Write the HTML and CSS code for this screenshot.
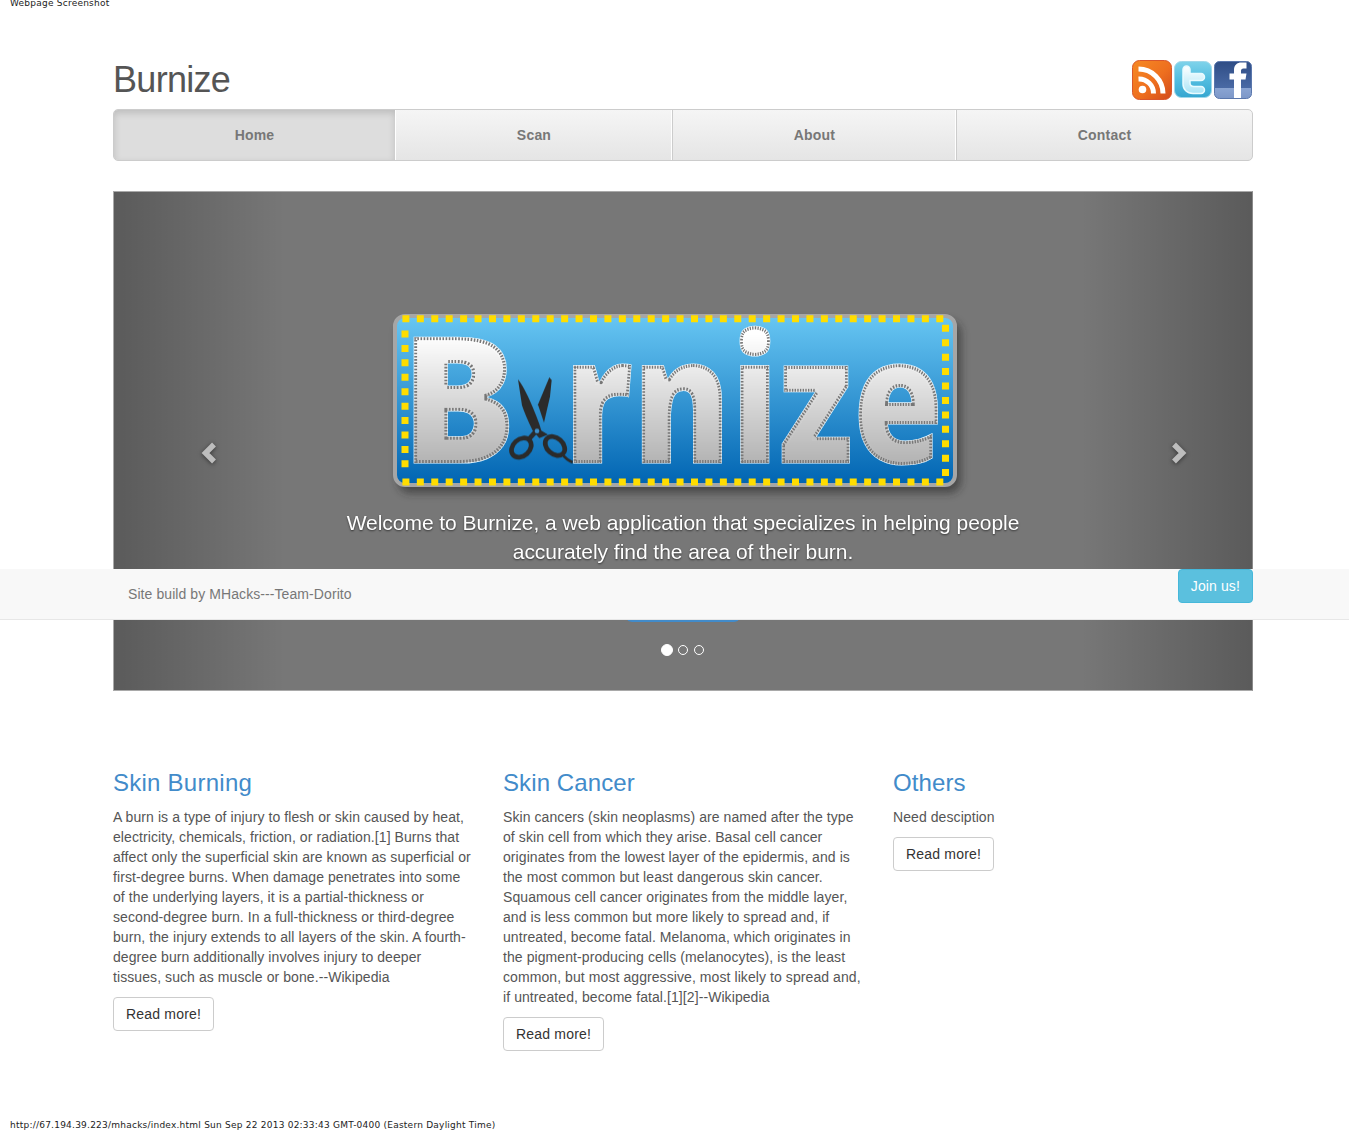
FILE: index.html
```html
<!DOCTYPE html>
<html lang="en">
<head>
    <meta charset="UTF-8">
    <meta name="viewport" content="width=device-width, initial-scale=1.0">
    <title>Burnize</title>
    <link rel="stylesheet" href="styles.css">
</head>
<body>
    <div class="shot-caption top-caption">Webpage Screenshot</div>

    <div class="container">
        <div class="masthead">
            <h1>Burnize</h1>
            <div class="social">
                <svg class="icon-rss" width="40" height="40" viewBox="0 0 40 40">
                    <defs>
                        <linearGradient id="rssBg" x1="0" y1="0" x2="1" y2="1">
                            <stop offset="0" stop-color="#f68a24"/>
                            <stop offset="0.55" stop-color="#ee6f1f"/>
                            <stop offset="1" stop-color="#d24a1c"/>
                        </linearGradient>
                    </defs>
                    <rect x="0.5" y="0.5" width="39" height="39" rx="7" fill="url(#rssBg)" stroke="#d8562c"/>
                    <circle cx="10.5" cy="29.5" r="3.8" fill="#fff"/>
                    <path d="M6.5 19 A14.5 14.5 0 0 1 21.5 33.5" fill="none" stroke="#fff" stroke-width="5"/>
                    <path d="M6.5 9 A24.5 24.5 0 0 1 31 33.5" fill="none" stroke="#fff" stroke-width="5"/>
                </svg>
                <svg class="icon-twitter" width="38" height="38" viewBox="0 0 38 38">
                    <defs>
                        <linearGradient id="twBg" x1="0" y1="0" x2="0" y2="1">
                            <stop offset="0" stop-color="#7fd3ea"/>
                            <stop offset="0.5" stop-color="#52bde0"/>
                            <stop offset="1" stop-color="#35a6d0"/>
                        </linearGradient>
                        <linearGradient id="twT" x1="0" y1="0" x2="0" y2="1">
                            <stop offset="0" stop-color="#ffffff"/>
                            <stop offset="1" stop-color="#a9e4f6"/>
                        </linearGradient>
                    </defs>
                    <rect x="0.5" y="0.5" width="37" height="36" rx="7" fill="url(#twBg)" stroke="#9fd8ea"/>
                    <path d="M9 8.5 a3.5 3.5 0 0 1 7 0 v4 h11 a3.5 3.5 0 0 1 0 7 h-11 v2.5 c0 2 1.5 3.5 4 3.5 h7 a3.5 3.5 0 0 1 0 7 h-8 c-6 0 -10 -4 -10 -9.5 z" fill="url(#twT)" stroke="#e8fbff" stroke-width="1.5"/>
                </svg>
                <svg class="icon-facebook" width="38" height="38" viewBox="0 0 38 38">
                    <defs>
                        <linearGradient id="fbBg" x1="0" y1="0" x2="0" y2="1">
                            <stop offset="0" stop-color="#2f4d85"/>
                            <stop offset="0.72" stop-color="#4a6aa5"/>
                            <stop offset="0.72" stop-color="#8aa4d2"/>
                            <stop offset="1" stop-color="#7c97c8"/>
                        </linearGradient>
                    </defs>
                    <rect x="0.5" y="0.5" width="37" height="37" rx="5" fill="url(#fbBg)" stroke="#5a77ac"/>
                    <path d="M20 37 V18.5 h-4.5 v-6 H20 V9 c0 -5 3 -7.5 7.5 -7.5 h5 v6 H29.5 c-1.8 0 -2.5 1 -2.5 2.5 v2.5 h5.5 L31.5 18.5 H27 v18.5 z" fill="#fff"/>
                </svg>
            </div>
        </div>

        <ul class="main-nav">
            <li class="active"><a href="#">Home</a></li>
            <li><a href="#">Scan</a></li>
            <li><a href="#">About</a></li>
            <li><a href="#">Contact</a></li>
        </ul>

        <div class="carousel">
            <svg class="logo" width="606" height="200" viewBox="0 0 606 200">
                <defs>
                    <linearGradient id="boardBg" x1="0" y1="0" x2="0" y2="1">
                        <stop offset="0" stop-color="#67c6f3"/>
                        <stop offset="1" stop-color="#0064b2"/>
                    </linearGradient>
                    <linearGradient id="letterFill" gradientUnits="userSpaceOnUse" x1="0" y1="-125" x2="0" y2="2">
                        <stop offset="0" stop-color="#ffffff"/>
                        <stop offset="1" stop-color="#b4b4b4"/>
                    </linearGradient>
                    <filter id="boardShadow" x="-5%" y="-10%" width="110%" height="125%">
                        <feGaussianBlur stdDeviation="4"/>
                    </filter>
                    <filter id="letterInset" color-interpolation-filters="sRGB">
                        <feMorphology operator="erode" radius="2.8"/>
                    </filter>
                    <clipPath id="lettersClip">
                        <use href="#logoB"/>
                        <use href="#logoRest"/>
                    </clipPath>
                </defs>
                <rect x="18" y="21" width="563" height="172" rx="12" fill="#222" opacity=".55" filter="url(#boardShadow)"/>
                <rect x="15" y="16" width="560" height="169" rx="10" fill="url(#boardBg)" stroke="#a6a6a6" stroke-width="4"/>
                <line class="stitch" x1="22.4" y1="18.7" x2="568" y2="18.7"/>
                <line class="stitch" x1="22.4" y1="182" x2="568" y2="182"/>
                <line class="stitch" x1="25" y1="30.5" x2="25" y2="170"/>
                <line class="stitch" x1="565.5" y1="24.8" x2="565.5" y2="176"/>
                <g class="letters-base">
                    <text id="logoB" class="logo-word" transform="translate(21 163) scale(.98 1)">B</text>
                    <text id="logoRest" class="logo-word" transform="translate(184 163) scale(.837 1)">rnize</text>
                </g>
                <g clip-path="url(#lettersClip)">
                    <g class="letters-dash">
                        <use href="#logoB"/>
                        <use href="#logoRest"/>
                    </g>
                    <g class="letters-top" filter="url(#letterInset)">
                        <use href="#logoB"/>
                        <use href="#logoRest"/>
                    </g>
                </g>
                <g transform="scale(.3333)" fill="#2b2b2b">
                    <path d="M414 238 Q440 270 478 372 L484 392 L504 404 L478 414 L458 392 Q436 346 426 316 Z"/>
                    <path d="M508 232 L515 240 L510 290 L492 368 L474 314 Z"/>
                    <g fill="none" stroke="#2b2b2b">
                        <ellipse cx="424" cy="443" rx="33" ry="25" transform="rotate(-42 424 443)" stroke-width="14"/>
                        <ellipse cx="525" cy="438" rx="33" ry="24" transform="rotate(42 525 438)" stroke-width="14"/>
                        <path d="M466 396 L446 418" stroke-width="14"/>
                        <path d="M546 462 Q560 480 578 487" stroke-width="8"/>
                    </g>
                    <circle cx="471" cy="393" r="7" fill="#3d8fca"/>
                </g>
            </svg>
            <div class="control control-left">
                <svg width="16" height="22" viewBox="0 0 16 22"><polyline points="13,2.5 4.5,11 13,19.5"/></svg>
            </div>
            <div class="control control-right">
                <svg width="16" height="22" viewBox="0 0 16 22"><polyline points="3,2.5 11.5,11 3,19.5"/></svg>
            </div>
            <div class="caption">
                <p>Welcome to Burnize, a web application that specializes in helping people accurately find the area of their burn.</p>
                <a class="learn-btn" href="#"></a>
            </div>
            <ol class="indicators">
                <li class="active"></li>
                <li></li>
                <li></li>
            </ol>
        </div>

        <div class="columns">
            <div class="column">
                <h2 class="burning-title">Skin Burning</h2>
                <p>A burn is a type of injury to flesh or skin caused by heat, electricity, chemicals, friction, or radiation.[1] Burns that affect only the superficial skin are known as superficial or first-degree burns. When damage penetrates into some of the underlying layers, it is a partial-thickness or second-degree burn. In a full-thickness or third-degree burn, the injury extends to all layers of the skin. A fourth-degree burn additionally involves injury to deeper tissues, such as muscle or bone.--Wikipedia</p>
                <a class="btn" href="#">Read more!</a>
            </div>
            <div class="column">
                <h2>Skin Cancer</h2>
                <p>Skin cancers (skin neoplasms) are named after the type of skin cell from which they arise. Basal cell cancer originates from the lowest layer of the epidermis, and is the most common but least dangerous skin cancer. Squamous cell cancer originates from the middle layer, and is less common but more likely to spread and, if untreated, become fatal. Melanoma, which originates in the pigment-producing cells (melanocytes), is the least common, but most aggressive, most likely to spread and, if untreated, become fatal.[1][2]--Wikipedia</p>
                <a class="btn" href="#">Read more!</a>
            </div>
            <div class="column">
                <h2>Others</h2>
                <p>Need desciption</p>
                <a class="btn" href="#">Read more!</a>
            </div>
        </div>
    </div>

    <div class="bottom-bar">
        <div class="bottom-inner">
            <span class="credit">Site build by MHacks---Team-Dorito</span>
            <a class="btn-join" href="#">Join us!</a>
        </div>
    </div>

    <div class="shot-caption bottom-caption">http://67.194.39.223/mhacks/index.html Sun Sep 22 2013 02:33:43 GMT-0400 (Eastern Daylight Time)</div>
</body>
</html>
```

FILE: styles.css
```css
html, body {
    margin: 0;
    padding: 0;
}
body {
    font-family: "Liberation Sans", Arial, sans-serif;
    font-size: 14px;
    line-height: 20px;
    letter-spacing: .08px;
    color: #555;
    background-color: #fff;
    min-height: 1131px;
    display: flex;
    flex-direction: column;
    position: relative;
}
a {
    text-decoration: none;
}
.shot-caption {
    font-family: "DejaVu Sans", Verdana, sans-serif;
    font-size: 9px;
    line-height: 11px;
    letter-spacing: .23px;
    color: #222;
    padding-left: 10px;
}
.top-caption {
    margin-top: -2px;
}
.bottom-caption {
    margin-top: auto;
}
.container {
    width: 1140px;
    margin-left: 113px;
}
.masthead {
    display: flex;
    justify-content: space-between;
    align-items: center;
    height: 40px;
    margin-top: 51px;
    margin-bottom: 9px;
}
.masthead h1 {
    margin: 0;
    font-size: 36px;
    line-height: 40px;
    font-weight: 400;
    letter-spacing: -.7px;
    color: #555;
}
.social {
    display: flex;
    align-items: center;
    gap: 2px;
    margin-right: 1px;
}
.main-nav {
    display: grid;
    grid-template-columns: 282px 277px 284px 1fr;
    height: 52px;
    margin: 0 0 30px;
    padding: 0;
    list-style: none;
    box-sizing: border-box;
    border: 1px solid #ccc;
    border-radius: 5px;
    background: linear-gradient(to bottom, #f5f5f5, #e5e5e5);
    overflow: hidden;
}
.main-nav li {
    border-right: 1px solid #ccc;
    box-shadow: inset -1px 0 0 #fff;
}
.main-nav li:last-child {
    border-right: 0;
    box-shadow: none;
}
.main-nav a {
    display: flex;
    align-items: center;
    justify-content: center;
    height: 100%;
    font-weight: 700;
    letter-spacing: .2px;
    color: #777;
}
.main-nav .active {
    background-color: #ddd;
    box-shadow: inset 0 3px 7px rgba(0, 0, 0, .15);
    border-right: 1px solid #fff;
}
.carousel {
    position: relative;
    height: 500px;
    box-sizing: border-box;
    background-color: #777;
    border: 1px solid #a9a9a9;
    border-right-color: #8a8a8a;
    display: flex;
    justify-content: center;
    align-items: flex-start;
    padding-top: 108px;
}
.logo {
    display: block;
    overflow: visible;
}
.stitch {
    stroke: #ffdd00;
    stroke-width: 7;
    stroke-dasharray: 7 7.43;
}
.logo-word {
    font-family: "Open Sans", "Liberation Sans", sans-serif;
    font-size: 175px;
    font-weight: 800;
}
.letters-base {
    fill: url(#letterFill);
    stroke: #e4f3fb;
    stroke-width: 1.2;
}
.letters-dash {
    fill: url(#letterFill);
    stroke: #777;
    stroke-width: 6.7;
    stroke-dasharray: 1.6 1.6;
}
.letters-top {
    fill: url(#letterFill);
}
.control {
    position: absolute;
    top: 0;
    bottom: 0;
    width: 15%;
    display: flex;
    align-items: center;
    justify-content: center;
    box-sizing: border-box;
}
.control svg {
    margin-bottom: -24px;
    filter: drop-shadow(0 1px 2px rgba(0, 0, 0, .5));
}
.control polyline {
    fill: none;
    stroke: #bdbdbd;
    stroke-width: 5.5;
}
.control-left {
    left: 0;
    padding-left: 20px;
    background: linear-gradient(to right, rgba(0, 0, 0, .24), rgba(0, 0, 0, 0));
}
.control-right {
    right: 0;
    padding-left: 24px;
    background: linear-gradient(to right, rgba(0, 0, 0, 0), rgba(0, 0, 0, .24));
}
.caption {
    position: absolute;
    left: 20%;
    right: 20%;
    top: 316px;
    text-align: center;
    color: #fff;
    text-shadow: 0 1px 2px rgba(0, 0, 0, .6);
}
.caption p {
    margin: 0;
    font-size: 21px;
    line-height: 29px;
    letter-spacing: -.04px;
}
.learn-btn {
    display: block;
    width: 114px;
    height: 48px;
    margin: 8px auto 0;
    box-sizing: border-box;
    background-color: #428bca;
    border-radius: 6px;
}
.indicators {
    position: absolute;
    left: 0;
    right: 0;
    bottom: 34px;
    margin: 0;
    padding: 0 2px 0 0;
    list-style: none;
    display: flex;
    justify-content: center;
    align-items: center;
}
.indicators li {
    width: 10px;
    height: 10px;
    margin: 0 3px;
    box-sizing: border-box;
    border: 1px solid #fff;
    border-radius: 50%;
}
.indicators .active {
    width: 12px;
    height: 12px;
    margin-right: 2px;
    background-color: #fff;
}
.columns {
    display: grid;
    grid-template-columns: repeat(3, 360px);
    gap: 30px;
    margin-top: 69px;
}
.column h2 {
    margin: 10px 0 11px;
    font-size: 24px;
    line-height: 26px;
    font-weight: 400;
    letter-spacing: .1px;
    color: #428bca;
}
.column .burning-title {
    letter-spacing: .25px;
}
.column p {
    margin: 0 0 10px;
}
.btn {
    display: inline-block;
    padding: 6px 12px;
    border: 1px solid #ccc;
    border-radius: 4px;
    letter-spacing: .2px;
    color: #333;
}
.bottom-bar {
    position: absolute;
    top: 569px;
    left: 0;
    right: 0;
    height: 51px;
    box-sizing: border-box;
    background-color: #f8f8f8;
    border-bottom: 1px solid #e7e7e7;
}
.bottom-inner {
    width: 1140px;
    margin-left: 113px;
    display: flex;
    justify-content: space-between;
    align-items: flex-start;
}
.credit {
    margin: 15px 0 0 15px;
    color: #777;
}
.btn-join {
    display: block;
    padding: 6px 12px;
    border: 1px solid #46b8da;
    border-radius: 4px;
    letter-spacing: .12px;
    background-color: #5bc0de;
    color: #fff;
}
```
